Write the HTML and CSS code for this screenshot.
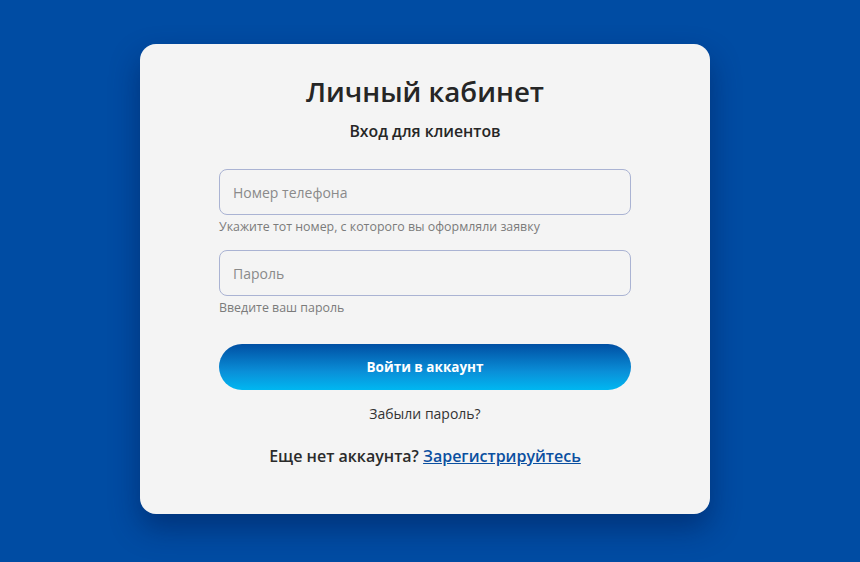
FILE: index.html
```html
<!DOCTYPE html>
<html lang="ru">
<head>
<meta charset="utf-8">
<title>Личный кабинет</title>
<link rel="stylesheet" href="styles.css">
</head>
<body>
<main class="page">
  <section class="card">
    <h1 class="title">Личный кабинет</h1>
    <p class="subtitle">Вход для клиентов</p>
    <form class="form">
      <div class="field">
        <input class="input" type="tel" placeholder="Номер телефона">
        <span class="hint">Укажите тот номер, с которого вы оформляли заявку</span>
      </div>
      <div class="field">
        <input class="input" type="password" placeholder="Пароль">
        <span class="hint">Введите ваш пароль</span>
      </div>
      <button class="submit" type="button">Войти в аккаунт</button>
    </form>
    <p class="forgot">Забыли пароль?</p>
    <p class="register">Еще нет аккаунта? <a class="register-link" href="#">Зарегистрируйтесь</a></p>
  </section>
</main>
</body>
</html>
```

FILE: styles.css
```css
* { box-sizing: border-box; }
html, body { margin: 0; height: 100%; }
body {
  background: #004ca3;
  font-family: "Open Sans", "Noto Sans", sans-serif;
  color: #2b2b2b;
}
.page {
  padding: 44px 0 0 140px;
}
.card {
  width: 570px;
  height: 470px;
  background: #f4f4f4;
  border-radius: 16px;
  box-shadow: 0 14px 30px rgba(0, 20, 70, 0.45);
  padding: 30px 79px 0;
  display: flex;
  flex-direction: column;
  align-items: center;
}
.title {
  margin: 0;
  font-size: 27.7px;
  line-height: 34px;
  font-weight: 600;
  color: #262626;
}
.subtitle {
  margin: 13px 0 0;
  font-size: 15.8px;
  line-height: 20px;
  font-weight: 600;
  color: #262626;
}
.form {
  width: 100%;
  margin-top: 28px;
  display: flex;
  flex-direction: column;
}
.field {
  display: flex;
  flex-direction: column;
}
.field + .field { margin-top: 15px; }
.input {
  width: 100%;
  height: 46px;
  border: 1px solid #aab3d3;
  border-radius: 8px;
  background: #f4f4f4;
  padding: 0 13px;
  font-family: inherit;
  font-size: 14px;
  color: #333;
  outline: none;
}
.input::placeholder { color: #8a8a8a; }
.hint {
  margin-top: 4px;
  font-size: 12.4px;
  line-height: 16px;
  color: #7b7b7b;
}
.submit {
  margin-top: 28px;
  height: 46px;
  width: 100%;
  border: none;
  border-radius: 23px;
  background: linear-gradient(180deg, #004fa3 0%, #0a8fd8 60%, #00b7f1 100%);
  color: #fff;
  font-family: inherit;
  font-size: 13.5px;
  font-weight: 700;
}
.forgot {
  margin: 14px 0 0;
  font-size: 14px;
  line-height: 20px;
  color: #333;
}
.register {
  margin: 21px 0 0;
  font-size: 16px;
  line-height: 22px;
  font-weight: 600;
  color: #2b2b2b;
}
.register-link {
  color: #0a4fa0;
  text-decoration: underline;
}
```
